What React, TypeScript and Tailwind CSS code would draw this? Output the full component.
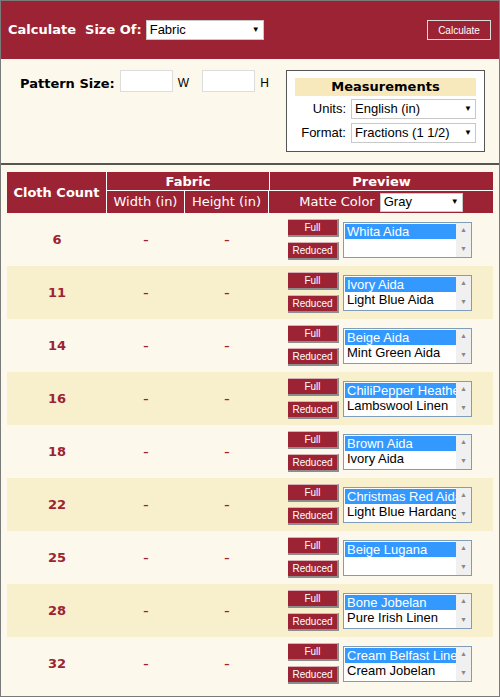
const rows: [string, string, string][] = [
  ["6", "Whita Aida", ""],
  ["11", "Ivory Aida", "Light Blue Aida"],
  ["14", "Beige Aida", "Mint Green Aida"],
  ["16", "ChiliPepper Heather", "Lambswool Linen"],
  ["18", "Brown Aida", "Ivory Aida"],
  ["22", "Christmas Red Aida", "Light Blue Hardanger"],
  ["25", "Beige Lugana", ""],
  ["28", "Bone Jobelan", "Pure Irish Linen"],
  ["32", "Cream Belfast Linen", "Cream Jobelan"],
];

function Select({ value, w, h = "h-[20px]" }: { value: string; w: string; h?: string }) {
  return (
    <div className={`${w} ${h} bg-white border border-[#c8c8c8] flex items-center justify-between px-[3px] text-[13px] font-normal text-black`}>
      <span>{value}</span>
      <span className="text-[8px]">▼</span>
    </div>
  );
}

function Btn({ label }: { label: string }) {
  return (
    <div className="w-[51px] h-[18px] bg-[#9c2333] text-white text-[10px] flex items-center justify-center border-r-2 border-b-2 border-[#8d8d8d] border-t border-t-[#d9b0b5]">
      {label}
    </div>
  );
}

export default function App() {
  return (
    <div className="w-[500px] h-[697px] bg-[#fdf8ec] border border-[#7a7a7a] overflow-hidden" style={{ fontFamily: "Verdana, 'DejaVu Sans', sans-serif" }}>
      <div className="h-[58px] bg-[#9c2333] flex items-center px-[7px] justify-between">
        <div className="flex items-center gap-[4px] text-white font-bold text-[13px]">
          <span>Calculate&nbsp; Size Of:</span>
          <div style={{ fontFamily: "'Liberation Sans', Arial, sans-serif" }}>
            <Select value="Fabric" w="w-[118px]" />
          </div>
        </div>
        <div className="w-[64px] h-[20px] border border-[#dcdcdc] text-white text-[10px] flex items-center justify-center mr-[1px]" style={{ fontFamily: "'Liberation Sans', Arial, sans-serif" }}>
          Calculate
        </div>
      </div>
      <div className="h-[106px] border-b-2 border-[#555] flex justify-between pl-[19px] pr-[14px] pt-[11px]">
        <div className="flex items-start gap-[5px] text-[13px]">
          <span className="font-bold mt-[4px]">Pattern Size:</span>
          <div className="w-[53px] h-[22px] bg-white border border-[#ddd]" />
          <span className="mt-[4px] text-[12px] mr-[8px]" style={{ fontFamily: "'Liberation Sans', Arial, sans-serif" }}>W</span>
          <div className="w-[53px] h-[22px] bg-white border border-[#ddd]" />
          <span className="mt-[4px] text-[12px]" style={{ fontFamily: "'Liberation Sans', Arial, sans-serif" }}>H</span>
        </div>
        <div className="w-[199px] h-[82px] bg-white border border-[#555] px-[8px] pt-[7px] text-[13px]" style={{ fontFamily: "'Liberation Sans', Arial, sans-serif" }}>
          <div className="bg-[#f8e9bd] text-center font-bold h-[18px] leading-[18px]" style={{ fontFamily: "Verdana, 'DejaVu Sans', sans-serif" }}>Measurements</div>
          <div className="flex items-center justify-end gap-[5px] mt-[3px]">
            <span>Units:</span>
            <Select value="English (in)" w="w-[125px]" />
          </div>
          <div className="flex items-center justify-end gap-[5px] mt-[4px]">
            <span>Format:</span>
            <Select value="Fractions (1 1/2)" w="w-[125px]" />
          </div>
        </div>
      </div>
      <div className="px-[6px] pt-[7px]">
        <div className="grid grid-cols-[100px_78px_84px_224px] bg-[#9c2333] text-white text-[13px]">
          <div className="row-span-2 flex items-center justify-center font-bold border-r border-white">Cloth Count</div>
          <div className="col-span-2 text-center font-bold h-[19px] border-b border-white">Fabric</div>
          <div className="text-center font-bold h-[19px] border-b border-white border-l">Preview</div>
          <div className="h-[22px] flex items-center justify-center border-r border-white">Width (in)</div>
          <div className="h-[22px] flex items-center justify-center border-r border-white">Height (in)</div>
          <div className="h-[22px] flex items-center justify-center gap-[5px]">
            Matte Color
            <div style={{ fontFamily: "'Liberation Sans', Arial, sans-serif" }}><Select value="Gray" w="w-[83px]" h="h-[19px]" /></div>
          </div>
        </div>
        {rows.map(([count, a, b], i) => (
          <div key={count} className={`grid grid-cols-[100px_78px_84px_224px] h-[53px] items-center text-[#9c2333] ${i % 2 ? "bg-[#f8efcc]" : "bg-[#fdf8ec]"}`}>
            <div className="text-center font-bold text-[13px]">{count}</div>
            <div className="text-center">-</div>
            <div className="text-center">-</div>
            <div className="flex items-center gap-[4px] pl-[19px]" style={{ fontFamily: "'Liberation Sans', Arial, sans-serif" }}>
              <div className="flex flex-col gap-[5px]">
                <Btn label="Full" />
                <Btn label="Reduced" />
              </div>
              <div className="w-[129px] h-[36px] bg-white border border-[#7f9db9] flex text-[13px] text-black">
                <div className="flex-1 min-w-0 overflow-hidden whitespace-nowrap pt-[1px] pl-[1px]">
                  <div className="bg-[#3399ff] text-white px-[2px] leading-[15px] overflow-hidden">{a}</div>
                  <div className="px-[2px] leading-[16px] overflow-hidden">{b}</div>
                </div>
                <div className="w-[15px] shrink-0 bg-[#f0f0f0] flex flex-col justify-between items-center text-[7px] text-[#888] py-[2px]">
                  <span>▲</span><span>▼</span>
                </div>
              </div>
            </div>
          </div>
        ))}
      </div>
    </div>
  );
}
